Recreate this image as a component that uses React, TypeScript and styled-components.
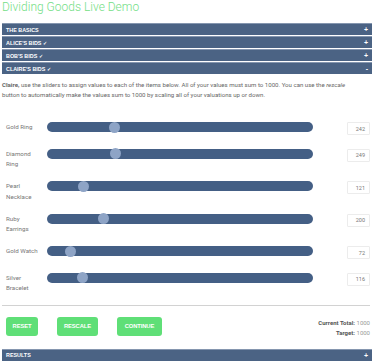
import React from "react";
import styled, { createGlobalStyle } from "styled-components";

const Global = createGlobalStyle`
  html, body { margin: 0; padding: 0; background: #fff; }
  body { font-family: Roboto, "Noto Sans", "Liberation Sans", sans-serif; }
  * { box-sizing: border-box; }
`;

const Page = styled.div`
  width: 375px;
  padding: 0 3px 0 2px;
`;

const Title = styled.h1`
  margin: 0 0 9px 0;
  font-family: Roboto, "Liberation Sans", sans-serif;
  font-weight: 300;
  font-size: 12px;
  line-height: 14px;
  color: #74de86;
`;

const Bars = styled.div`
  display: flex;
  flex-direction: column;
  gap: 1px;
`;

const Bar = styled.div`
  height: 12px;
  background: #4b6384;
  border-top: 1px solid #8596af;
  display: flex;
  align-items: center;
  justify-content: space-between;
  padding: 0 4px 0 4px;
  color: #fff;
  font-family: "Liberation Sans", Arial, sans-serif;
  font-weight: 700;
  font-size: 5.4px;
  text-transform: uppercase;
`;

const Sign = styled.span`
  font-size: 7px;
  font-weight: 700;
`;

const Paragraph = styled.p`
  margin: 6px 12px 22px 0;
  font-size: 6.1px;
  line-height: 10px;
  color: #666;
`;

const Rows = styled.div`
  display: flex;
  flex-direction: column;
  gap: 11.5px;
  padding: 0 2px 0 4px;
`;

const Row = styled.div`
  display: grid;
  grid-template-columns: 41px 266px 1fr 23px;
  align-items: start;
  min-height: 15px;
`;

const Label = styled.div`
  max-width: 36px;
  font-size: 6.2px;
  line-height: 10.5px;
  color: #777;
`;

const Track = styled.div`
  position: relative;
  height: 10px;
  border-radius: 5px;
  background: #445f85;
`;

const Thumb = styled.div`
  position: absolute;
  top: -0.5px;
  width: 11px;
  height: 11px;
  border-radius: 50%;
  background: #8ea4c6;
`;

const ValueBox = styled.div`
  grid-column: 4;
  height: 13px;
  border: 1px solid #ececec;
  border-radius: 1px;
  font-size: 5.5px;
  color: #777;
  display: flex;
  align-items: center;
  justify-content: flex-end;
  padding-right: 4px;
`;

const Divider = styled.hr`
  margin: 11px 2px 11px 0;
  border: 0;
  border-top: 1px solid #d2d2d2;
`;

const Footer = styled.div`
  display: flex;
  align-items: flex-start;
  justify-content: space-between;
  padding: 0 2px 0 4px;
  margin-bottom: 11px;
`;

const Buttons = styled.div`
  display: flex;
  gap: 19px;
`;

const Button = styled.button<{ $w: number }>`
  width: ${(p) => p.$w}px;
  height: 19px;
  border: 0;
  border-radius: 3px;
  background: #5fdf77;
  color: #fff;
  font-family: "Liberation Sans", Arial, sans-serif;
  font-size: 5.8px;
  font-weight: 700;
  padding: 0;
  letter-spacing: -0.1px;
`;

const Totals = styled.div`
  text-align: right;
  font-size: 6px;
  line-height: 10px;
  color: #999;
  padding-top: 1px;
  b { color: #555; font-weight: 700; }
`;

const items = [
  { label: "Gold Ring", value: 242 },
  { label: "Diamond Ring", value: 249 },
  { label: "Pearl Necklace", value: 121 },
  { label: "Ruby Earrings", value: 200 },
  { label: "Gold Watch", value: 72 },
  { label: "Silver Bracelet", value: 116 },
];

export default function App() {
  return (
    <Page>
      <Global />
      <Title>Dividing Goods Live Demo</Title>
      <Bars>
        <Bar>
          <span>The Basics</span>
          <Sign>+</Sign>
        </Bar>
        <Bar>
          <span>Alice's Bids ✓</span>
          <Sign>+</Sign>
        </Bar>
        <Bar>
          <span>Bob's Bids ✓</span>
          <Sign>+</Sign>
        </Bar>
        <Bar>
          <span>Claire's Bids ✓</span>
          <Sign>-</Sign>
        </Bar>
      </Bars>
      <Paragraph>
        <b>Claire,</b> use the sliders to assign values to each of the items below. All of your
        values must sum to 1000. You can use the <i>rescale</i> button to automatically make the
        values sum to 1000 by scaling all of your valuations up or down.
      </Paragraph>
      <Rows>
        {items.map((it) => (
          <Row key={it.label}>
            <Label>{it.label}</Label>
            <Track>
              <Thumb style={{ left: `${(it.value / 1000) * 255}px` }} />
            </Track>
            <ValueBox>{it.value}</ValueBox>
          </Row>
        ))}
      </Rows>
      <Divider />
      <Footer>
        <Buttons>
          <Button $w={32}>RESET</Button>
          <Button $w={41}>RESCALE</Button>
          <Button $w={45}>CONTINUE</Button>
        </Buttons>
        <Totals>
          <div>
            <b>Current Total:</b> 1000
          </div>
          <div>
            <b>Target:</b> 1000
          </div>
        </Totals>
      </Footer>
      <Bar>
        <span>Results</span>
        <Sign>+</Sign>
      </Bar>
    </Page>
  );
}
